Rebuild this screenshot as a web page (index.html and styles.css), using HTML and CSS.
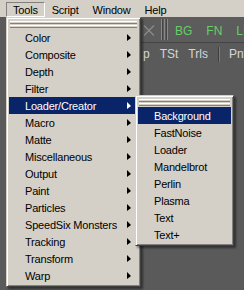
FILE: index.html
```html
<!DOCTYPE html>
<html lang="en">
<head>
<meta charset="UTF-8">
<title>Tools menu</title>
<link rel="stylesheet" href="styles.css">
</head>
<body>
<div class="menubar">
    <span class="mb-item pressed">Tools</span>
    <span class="mb-item">Script</span>
    <span class="mb-item">Window</span>
    <span class="mb-item">Help</span>
</div>

<div class="workspace">
    <div class="toolbar row1">
        <svg class="close" width="12" height="11" viewBox="0 0 12 11">
            <path d="M1 0.5 L11 10.5 M11 0.5 L1 10.5" stroke="#8c8c8c" stroke-width="1.2" fill="none"/>
        </svg>
        <span class="grip"></span>
        <span class="tb-green">BG</span>
        <span class="tb-green">FN</span>
        <span class="tb-green">LI</span>
    </div>
    <div class="toolbar row2">
        <span class="tb-text">p</span>
        <span class="tb-text">TSt</span>
        <span class="tb-text">Trls</span>
        <span class="tb-sep"></span>
        <span class="tb-text">Pnt</span>
    </div>
</div>

<div class="menu tools">
    <div class="tearoff"><div class="bar"></div><div class="bar"></div></div>
    <div class="item">Color<i class="arrow"></i></div>
    <div class="item">Composite<i class="arrow"></i></div>
    <div class="item">Depth<i class="arrow"></i></div>
    <div class="item">Filter<i class="arrow"></i></div>
    <div class="item active">Loader/Creator<i class="arrow"></i></div>
    <div class="item">Macro<i class="arrow"></i></div>
    <div class="item">Matte<i class="arrow"></i></div>
    <div class="item">Miscellaneous<i class="arrow"></i></div>
    <div class="item">Output<i class="arrow"></i></div>
    <div class="item">Paint<i class="arrow"></i></div>
    <div class="item">Particles<i class="arrow"></i></div>
    <div class="item">SpeedSix Monsters<i class="arrow"></i></div>
    <div class="item">Tracking<i class="arrow"></i></div>
    <div class="item">Transform<i class="arrow"></i></div>
    <div class="item">Warp<i class="arrow"></i></div>
</div>

<div class="menu sub">
    <div class="tearoff"><div class="bar"></div><div class="bar"></div></div>
    <div class="item active">Background</div>
    <div class="item">FastNoise</div>
    <div class="item">Loader</div>
    <div class="item">Mandelbrot</div>
    <div class="item">Perlin</div>
    <div class="item">Plasma</div>
    <div class="item">Text</div>
    <div class="item">Text+</div>
</div>
</body>
</html>
```

FILE: styles.css
```css
body {
    margin: 0;
    width: 244px;
    height: 290px;
    overflow: hidden;
    background-color: #5a5a5a;
    font-family: "Liberation Sans", Arial, sans-serif;
    font-size: 11px;
    letter-spacing: -0.2px;
    color: #000;
}

.menubar {
    display: flex;
    height: 17px;
    padding-left: 6px;
    background-color: #d4d0c8;
    box-sizing: border-box;
    padding-top: 2px;
}

.mb-item {
    height: 15px;
    line-height: 14px;
    padding: 0 6px;
    border: 1px solid transparent;
    box-sizing: border-box;
}

.mb-item.pressed {
    border-color: #808080 #fff #fff #808080;
}

.workspace {
    padding-left: 141px;
}

.toolbar {
    display: flex;
    align-items: center;
    overflow: hidden;
}

.toolbar > * {
    flex-shrink: 0;
}

.row1 {
    height: 25px;
    border-bottom: 1px solid #444;
    background-color: #5c5c5c;
}

.row2 {
    height: 18px;
    padding-top: 2px;
}

.close {
    margin-left: 2px;
    margin-top: 2px;
}

.grip {
    width: 7px;
    height: 21px;
    margin: 0 7px 0 6px;
    border-left: 1px solid #8a8a8a;
    border-right: 1px solid #8a8a8a;
    box-shadow: inset 1px 0 #444, inset -1px 0 #444;
    box-sizing: border-box;
    background: linear-gradient(to right, transparent 2px, #8a8a8a 2px, #8a8a8a 3px, transparent 3px);
}

.tb-green {
    color: #68cc68;
    font-size: 12px;
    letter-spacing: 0;
    margin-right: 14px;
    margin-top: 2px;
}

.tb-text {
    color: #d6d6d6;
    font-size: 12px;
    letter-spacing: 0;
    margin-right: 10px;
}

.tb-text:first-child {
    margin-left: 2px;
}

.tb-sep {
    width: 1px;
    height: 15px;
    background-color: #3e3e3e;
    border-right: 1px solid #7a7a7a;
    margin-right: 9px;
}

.menu {
    position: absolute;
    background-color: #d4d0c8;
    border: 1px solid;
    border-color: #d4d0c8 #404040 #404040 #d4d0c8;
    box-shadow: inset 1px 1px #fff, inset -1px -1px #808080, 2px 2px 2px rgba(0, 0, 0, 0.45);
    padding: 2px;
    box-sizing: border-box;
}

.tools {
    left: 6px;
    top: 17px;
    width: 135px;
}

.sub {
    left: 135px;
    top: 95px;
    width: 99px;
}

.tearoff {
    height: 9px;
    padding: 1px 1px 0 1px;
    box-sizing: border-box;
}

.tearoff .bar {
    height: 1px;
    margin-bottom: 1px;
    background-color: #d4d0c8;
    border-top: 1px solid #fff;
    border-bottom: 1px solid #808080;
}

.item {
    display: flex;
    align-items: center;
    height: 17px;
    padding-left: 16px;
    white-space: nowrap;
}

.item.active {
    background-color: #0a246a;
    color: #fff;
}

.arrow {
    width: 0;
    height: 0;
    margin-left: auto;
    margin-right: 7px;
    border-left: 4px solid #000;
    border-top: 4px solid transparent;
    border-bottom: 3px solid transparent;
}

.item.active .arrow {
    border-left-color: #fff;
}
```
